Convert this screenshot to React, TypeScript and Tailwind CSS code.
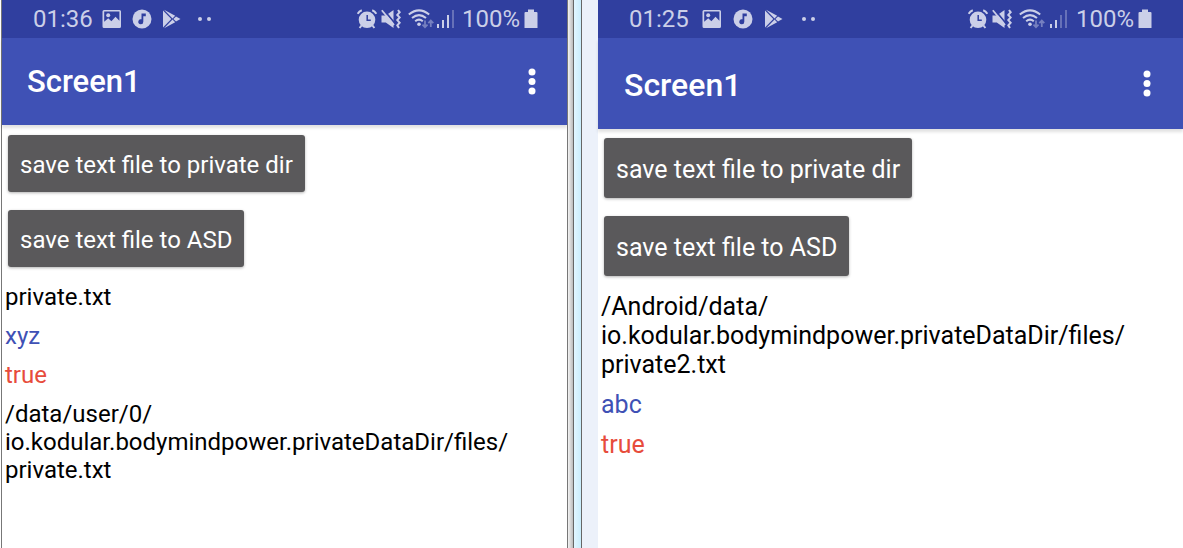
import clsx from "clsx";

type Line = { text: string[]; color: string };

type PhoneProps = {
  time: string;
  signal: number;
  large?: boolean;
  lines: Line[];
};

const ImageIcon = () => (
  <svg className="h-5 w-5" viewBox="0 0 20 20" fill="currentColor">
    <path
      fillRule="evenodd"
      d="M2 1h15.500a1.500 1.500 0 0 1 1.500 1.500v15a1.500 1.500 0 0 1-1.500 1.500H2A1.500 1.500 0 0 1 .5 17.500v-15A1.500 1.500 0 0 1 2 1zM2.200 2.500v10.300l4-3.600 3.200 3 4.100-4.400 3.900 4V2.500z"
    />
    <circle cx="6.200" cy="6.200" r="2" />
  </svg>
);

const MusicIcon = () => (
  <svg className="h-5 w-5" viewBox="0 0 20 20">
    <circle cx="10" cy="10" r="9.500" fill="currentColor" />
    <path d="M9.500 4.500h4.300v2.800h-2.500v5.400a2.500 2.500 0 1 1-1.800-2.400z" fill="#303f9f" />
  </svg>
);

const PlayIcon = () => (
  <svg className="h-5 w-5" viewBox="0 0 20 20" fill="currentColor">
    <path d="M1 1.500v17L9.300 10z" />
    <path d="M2 .8l11.200 6-2.700 2.600zM2 19.200l11.200-6-2.700-2.600z" />
    <path d="M14 7.400l4.500 2.600-4.500 2.600L11.400 10z" />
  </svg>
);

const AlarmIcon = () => (
  <svg className="h-5 w-5" viewBox="0 0 20 20">
    <circle cx="10" cy="10.800" r="8.300" fill="currentColor" />
    <g fill="none" stroke="currentColor" strokeWidth="2">
      <path d="M.7 4.800Q2 2.200 4.800 1.200M19.300 4.800Q18 2.200 15.200 1.200" />
      <path d="M4.500 16.500L2.600 19M15.500 16.500l1.900 2.500" />
    </g>
    <path d="M10.200 6v5.300h3.600" fill="none" stroke="#303f9f" strokeWidth="1.500" />
  </svg>
);

const VibrateIcon = () => (
  <svg className="h-5 w-5" viewBox="0 0 20 20">
    <path d="M.5 6.500h4.300l7.700-5.500v18L4.800 13.500H.5z" fill="currentColor" />
    <path d="M2 0l12 14.500" stroke="#303f9f" strokeWidth="1.800" />
    <path d="M.8 1.200l12.200 14.800" stroke="currentColor" strokeWidth="1.800" />
    <path
      d="M17 1l1.700 2.300-2.400 2.600 2.400 2.600-2.400 2.600 2.400 2.600-2.400 2.600L18 19"
      fill="none"
      stroke="currentColor"
      strokeWidth="2"
    />
  </svg>
);

const WifiIcon = () => (
  <svg className="h-5 w-[26px]" viewBox="0 0 26 20" fill="none" stroke="currentColor">
    <g strokeWidth="2">
      <path d="M.8 5.500Q11 -2.700 21.200 5.500" />
      <path d="M4 9Q11 3.200 18 9" />
      <path d="M7.200 12.300Q11 9 14.800 12.300" />
    </g>
    <circle cx="11" cy="15.300" r="1.800" fill="currentColor" stroke="none" />
    <g strokeWidth="1.800" opacity=".45">
      <path d="M17 11.500v7M14.500 15.700l2.500 2.600 2.500-2.600" />
      <path d="M22.800 18v-6M20.300 14.200l2.500-2.600 2.500 2.600" />
    </g>
  </svg>
);

const SignalIcon = ({ level }: { level: number }) => (
  <svg className="h-5 w-[18px]" viewBox="0 0 18 20" fill="currentColor">
    {[4, 8, 13, 18].map((h, i) => (
      <rect key={h} x={i * 5} y={19 - h} width="2" height={h} opacity={i < level ? 1 : 0.35} />
    ))}
  </svg>
);

const BatteryIcon = () => (
  <svg className="h-5 w-[14px]" viewBox="0 0 14 20" fill="currentColor">
    <path d="M4 .5h6V3h2.500q1 0 1 1v15H.5V4q0-1 1-1H4z" />
  </svg>
);

const StatusBar = ({ time, signal, large }: { time: string; signal: number; large?: boolean }) => (
  <div
    className={clsx(
      "flex h-[38px] items-center justify-between bg-[#303f9f] pl-[31px] text-2xl text-[#cbcfe8]",
      large ? "pr-[31px]" : "pr-[29px]"
    )}
  >
    <div className="flex items-center">
      <span className={large ? "w-[73px]" : "w-[69px]"}>{time}</span>
      <div className={clsx("flex items-center", large ? "gap-[11px]" : "gap-[10px]")}>
        <ImageIcon />
        <MusicIcon />
        <PlayIcon />
      </div>
      <div className={clsx("flex gap-[5px]", large ? "ml-[18px]" : "ml-4")}>
        <span className="h-1 w-1 rounded-full bg-current" />
        <span className="h-1 w-1 rounded-full bg-current" />
      </div>
    </div>
    <div className="flex items-center">
      <div className="flex items-center gap-1">
        <AlarmIcon />
        <VibrateIcon />
      </div>
      <div className={clsx("ml-[7px] flex items-center", large ? "mr-2 gap-[5px]" : "mr-[7px] gap-[3px]")}>
        <WifiIcon />
        <SignalIcon level={signal} />
      </div>
      <span>100%</span>
      <span className="ml-1">
        <BatteryIcon />
      </span>
    </div>
  </div>
);

const Phone = ({ time, signal, large, lines }: PhoneProps) => {
  const button = clsx(
    "rounded-[3px] bg-[#5a595b] px-3 pt-0.5 text-white shadow-[0_1px_3px_rgba(0,0,0,0.3)]",
    large ? "h-[60px]" : "h-[57px]"
  );

  return (
    <section className="min-w-0 bg-white">
      <StatusBar time={time} signal={signal} large={large} />
      <header
        className={clsx(
          "flex items-center justify-between bg-[#3f51b5] text-white shadow-[0_3px_3px_rgba(0,0,0,0.12)]",
          large ? "h-[91px] pl-[26px] pr-[26px]" : "h-[87px] pl-[25px] pr-[25px]"
        )}
      >
        <h1 className={clsx("pt-0.5 font-medium", large ? "text-[32px]" : "text-[31px]")}>Screen1</h1>
        <button aria-label="More options" className="flex w-5 justify-center">
          <svg className="h-7 w-2" viewBox="0 0 8 28" fill="currentColor">
            <circle cx="4" cy="4" r="3.500" />
            <circle cx="4" cy="13.500" r="3.500" />
            <circle cx="4" cy="23" r="3.500" />
          </svg>
        </button>
      </header>
      <main className={large ? "text-[25px] leading-[29px]" : "text-2xl leading-7"}>
        <div
          className={clsx("flex flex-col items-start gap-[18px] px-[6px]", large ? "pt-[9px]" : "pt-[10px]")}
        >
          <button className={button}>save text file to private dir</button>
          <button className={button}>save text file to ASD</button>
        </div>
        <div className={clsx("flex flex-col pt-4", large ? "gap-[11px] px-[3px]" : "gap-[11px] px-[3px]")}>
          {lines.map(({ text, color }) => (
            <p key={text.join("")} className={color}>
              {text.map((part) => (
                <span key={part} className="block">
                  {part}
                </span>
              ))}
            </p>
          ))}
        </div>
      </main>
    </section>
  );
};

const App = () => {
  return (
    <div className="bg-white pl-px font-['Roboto',sans-serif]">
      <div className="grid min-h-screen grid-cols-[565fr_31px_585fr] border-l border-[#777]">
        <Phone
          time="01:36"
          signal={3}
          lines={[
            { text: ["private.txt"], color: "text-black" },
            { text: ["xyz"], color: "text-[#3f51b5]" },
            { text: ["true"], color: "text-[#e74c3c]" },
            {
              text: ["/data/user/0/", "io.kodular.bodymindpower.privateDataDir/files/", "private.txt"],
              color: "text-black",
            },
          ]}
        />
        <div className="flex bg-[#ecf1fa]">
          <div className="w-[6px] border-l border-[#777] bg-linear-to-r from-[#f4f4f4] to-[#bbb]" />
          <div className="w-[9px] border-x border-[#666] bg-linear-to-r from-[#e2f6ff] to-[#c9edfc]" />
        </div>
        <Phone
          large
          time="01:25"
          signal={2}
          lines={[
            {
              text: ["/Android/data/", "io.kodular.bodymindpower.privateDataDir/files/", "private2.txt"],
              color: "text-black",
            },
            { text: ["abc"], color: "text-[#3f51b5]" },
            { text: ["true"], color: "text-[#e74c3c]" },
          ]}
        />
      </div>
    </div>
  );
};

export default App;
